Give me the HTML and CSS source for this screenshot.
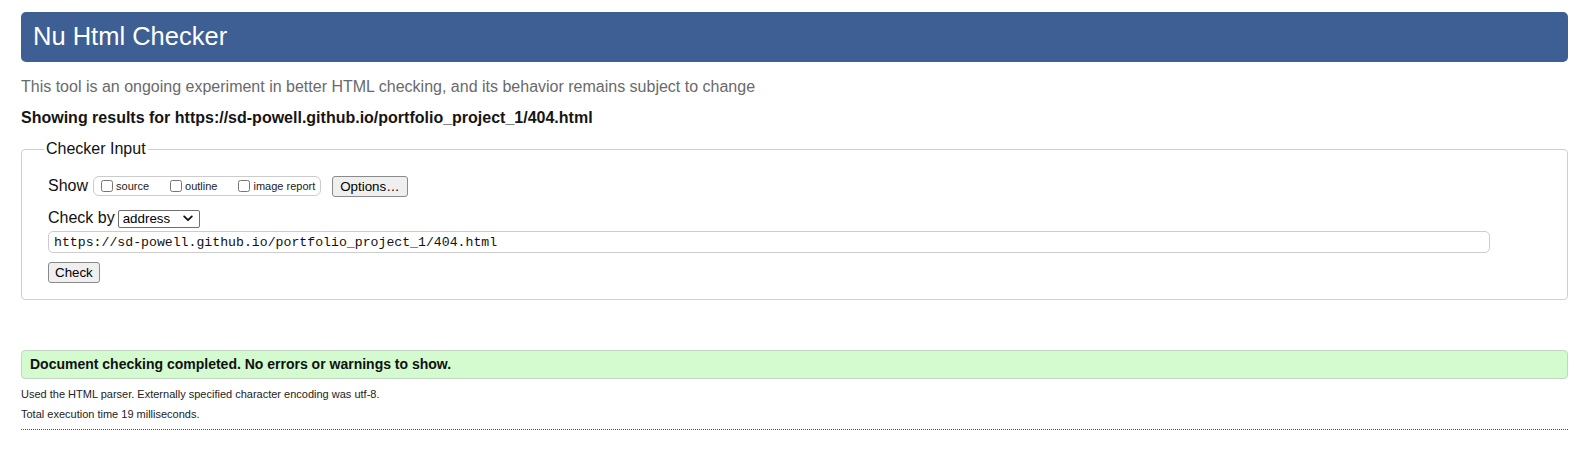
FILE: index.html
```html
<!DOCTYPE html>
<html lang="en">
<head>
<meta charset="utf-8">
<title>Showing results for https://sd-powell.github.io/portfolio_project_1/404.html - Nu Html Checker</title>
<link rel="stylesheet" href="styles.css">
</head>
<body>
<h1 class="brand">Nu Html Checker</h1>
<p class="intro">This tool is an ongoing experiment in better HTML checking, and its behavior remains subject to change</p>
<p class="showing">Showing results for https://sd-powell.github.io/portfolio_project_1/404.html</p>
<form class="checker">
  <fieldset class="input-box">
    <legend class="input-legend">Checker Input</legend>
    <div class="row row-show">
      <span class="row-label">Show</span>
      <span class="show-group">
        <label class="opt"><input type="checkbox" class="cb">source</label>
        <label class="opt"><input type="checkbox" class="cb">outline</label>
        <label class="opt opt-last"><input type="checkbox" class="cb">image report</label>
      </span>
      <button type="button" class="btn btn-options">Options…</button>
    </div>
    <div class="row row-by">
      <span class="row-label">Check by</span>
      <span class="select-wrap">
        <select class="select"><option>address</option></select>
        <svg class="chev" width="10" height="7" viewBox="0 0 10 7"><path d="M1.2 1.4 L5 5.2 L8.8 1.4" fill="none" stroke="#111" stroke-width="1.8" stroke-linecap="round" stroke-linejoin="round"/></svg>
      </span>
    </div>
    <div class="row row-url">
      <input type="text" class="url" value="https://sd-powell.github.io/portfolio_project_1/404.html">
    </div>
    <div class="row row-submit">
      <button type="button" class="btn btn-check">Check</button>
    </div>
  </fieldset>
</form>
<p class="success">Document checking completed. No errors or warnings to show.</p>
<p class="details">Used the HTML parser. Externally specified character encoding was utf-8.</p>
<p class="details">Total execution time 19 milliseconds.</p>
<hr class="end">
</body>
</html>
```
FILE: styles.css
```css
html, body {
  background: #ffffff;
}
body {
  margin: 0;
  padding: 0 20px 0 21px;
  font-family: "Liberation Sans", Arial, Helvetica, sans-serif;
  color: #111;
}
.brand {
  margin: 12px 0 0;
  padding: 10px 12px 12px;
  background: #3e5f94;
  color: #ffffff;
  font-size: 25.5px;
  line-height: 28px;
  font-weight: normal;
  border-radius: 5px;
}
.intro {
  margin: 15px 0 0;
  font-size: 16px;
  line-height: 20px;
  color: #6a6a6a;
}
.showing {
  margin: 11px 0 0;
  font-size: 16px;
  line-height: 20px;
  font-weight: bold;
  color: #151515;
}
.checker {
  margin: 12px 0 0;
}
.input-box {
  margin: 0;
  padding: 17px 26px 16px 26px;
  border: 1px solid #cfcfcf;
  border-radius: 4px;
  min-width: 0;
}
.input-legend {
  margin-left: -4px;
  padding: 0 2px;
  font-size: 16px;
  line-height: 18px;
  color: #111;
}
.row {
  display: flex;
  align-items: center;
}
.row-show {
  height: 22px;
}
.row-label {
  font-size: 16px;
  line-height: 20px;
  color: #111;
}
.show-group {
  display: inline-flex;
  align-items: center;
  box-sizing: border-box;
  height: 20px;
  margin-left: 5px;
  padding: 0 5px 0 3px;
  border: 1px solid #cccccc;
  border-radius: 6px;
}
.opt {
  display: inline-flex;
  align-items: center;
  font-size: 11px;
  color: #222;
  margin-right: 17px;
}
.opt-last {
  margin-right: 0;
}
.cb {
  width: 12px;
  height: 12px;
  margin: 0 3px 0 4px;
}
.btn {
  box-sizing: border-box;
  height: 21px;
  padding: 0 7px;
  font-family: "Liberation Sans", Arial, sans-serif;
  font-size: 13.33px;
  color: #000;
  background: #efefef;
  border: 1px solid #8a8a8a;
  border-radius: 3px;
}
.btn-options {
  margin-left: 11px;
}
.btn-check {
  padding: 0 6px;
}
.row-by {
  height: 20px;
  margin-top: 11px;
}
.select-wrap {
  position: relative;
  display: inline-block;
  margin-left: 3px;
  height: 18px;
}
.select {
  appearance: none;
  -webkit-appearance: none;
  box-sizing: border-box;
  width: 82px;
  height: 18px;
  padding: 0 0 0 4px;
  font-family: "Liberation Sans", Arial, sans-serif;
  font-size: 13.33px;
  line-height: 16px;
  color: #000;
  background: #ffffff;
  border: 1px solid #6f6f6f;
  border-radius: 2px;
}
.chev {
  position: absolute;
  right: 7px;
  top: 6px;
  pointer-events: none;
}
.row-url {
  margin-top: 3px;
}
.url {
  box-sizing: border-box;
  width: calc(100% - 51px);
  height: 22px;
  padding: 0 5px;
  font-family: "Liberation Mono", "DejaVu Sans Mono", monospace;
  font-size: 13.2px;
  line-height: 20px;
  color: #111;
  background: #fff;
  border: 1px solid #cccccc;
  border-radius: 5px;
}
.row-submit {
  margin-top: 9px;
}
.success {
  margin: 50px 0 0;
  padding: 0 8px;
  font-size: 14px;
  line-height: 27px;
  font-weight: bold;
  color: #111;
  background: #d3fbcf;
  border: 1px solid #c3d6c1;
  border-radius: 4px;
}
.details {
  margin: 0;
  font-size: 11px;
  line-height: 20px;
  color: #222;
}
.success + .details {
  margin-top: 5px;
}
.end {
  margin: 5px 0 0;
  height: 0;
  border: 0;
  border-top: 1px dotted #555;
}
```
